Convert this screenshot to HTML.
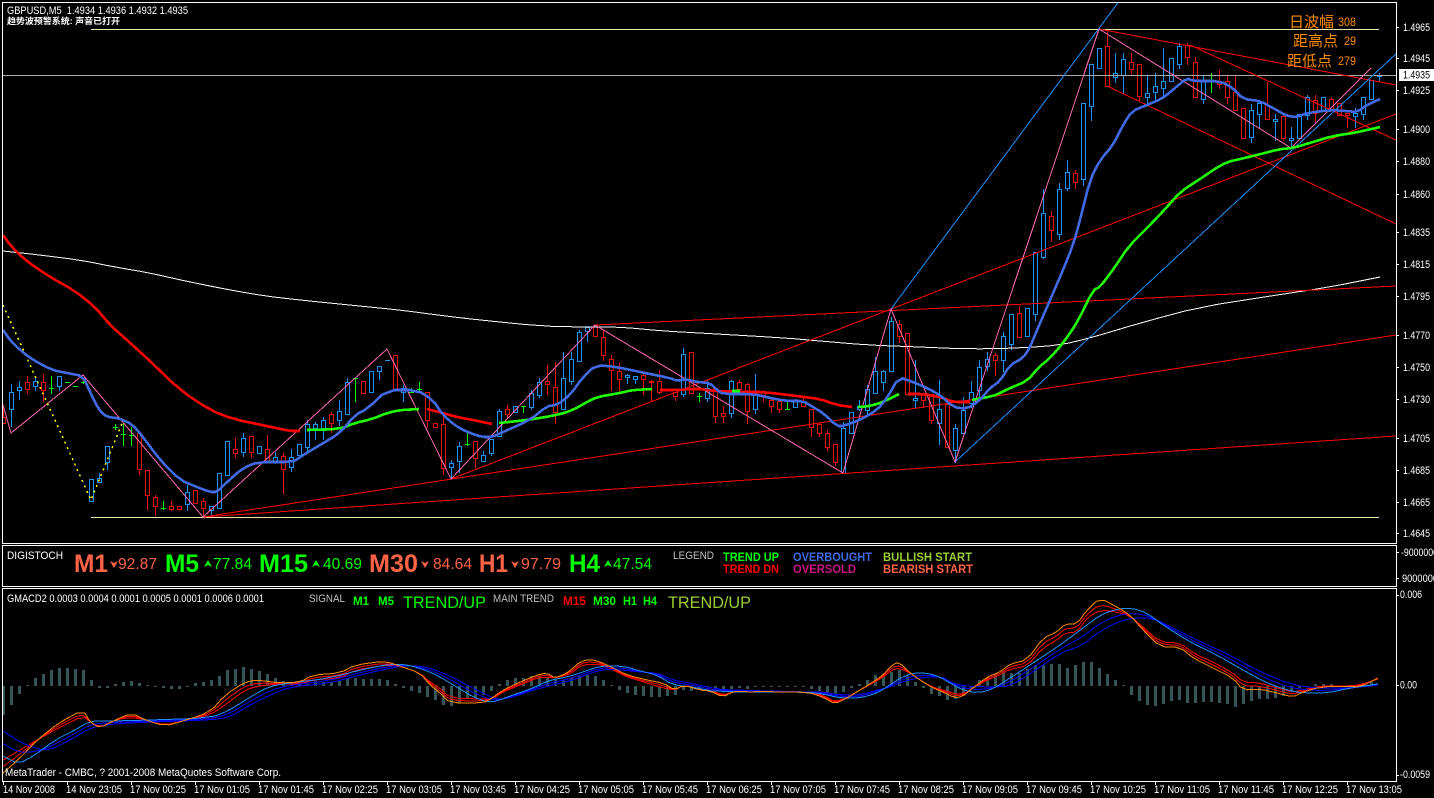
<!DOCTYPE html>
<html><head><meta charset="utf-8"><style>
html,body{margin:0;padding:0;background:#000;width:1434px;height:798px;overflow:hidden}
svg{display:block}
text{font-family:"Liberation Sans","WenQuanYi Zen Hei","Noto Sans CJK SC",sans-serif;fill:#fff;font-size:11px}
.b{font-weight:bold}
.g{fill:#00ff00}.o{fill:#ff6347}.v{font-size:16px}.big{font-size:25px;font-weight:bold}
.sm{font-size:12px;font-weight:bold}
.sil{fill:#c0c0c0}
.or{fill:#ff8c00;font-size:15px;font-family:"Noto Sans CJK SC",sans-serif}
.ord{fill:#ff8c00;font-size:12px}
</style></head><body>
<svg width="1434" height="798" viewBox="0 0 1434 798" xmlns="http://www.w3.org/2000/svg">
<defs><clipPath id="m"><rect x="3" y="3" width="1393" height="540"/></clipPath></defs>
<rect width="1434" height="798" fill="#000"/>
<g id="c" clip-path="url(#m)" shape-rendering="crispEdges"></g>
<g id="l" clip-path="url(#m)" fill="none" shape-rendering="crispEdges"></g>
<g id="h" shape-rendering="crispEdges"></g>
<g id="q" fill="none" shape-rendering="crispEdges"></g>
<g fill="none" stroke="#fff" shape-rendering="crispEdges">
<path d="M2.5 2.5H1396.5V543.5H2.5Z"/>
<path d="M2.5 545.5H1396.5V586.5H2.5Z"/>
<path d="M2.5 588.5H1396.5V781.5H2.5Z"/>
<path d="M1396 27.5h3M1396 58.5h3M1396 90.5h3M1396 129.5h3M1396 161.5h3M1396 194.5h3M1396 232.5h3M1396 264.5h3M1396 296.5h3M1396 335.5h3M1396 367.5h3M1396 399.5h3M1396 438.5h3M1396 470.5h3M1396 502.5h3M1396 533.5h3M1396 552.5h3M1396 578.5h3M1396 595.5h3M1396 685.5h3M1396 775.5h3"/>
<path d="M3.5 781v4M67.5 781v4M131.5 781v4M195.5 781v4M259.5 781v4M323.5 781v4M387.5 781v4M451.5 781v4M515.5 781v4M579.5 781v4M643.5 781v4M707.5 781v4M771.5 781v4M835.5 781v4M899.5 781v4M963.5 781v4M1027.5 781v4M1091.5 781v4M1155.5 781v4M1219.5 781v4M1283.5 781v4M1347.5 781v4"/>
</g>
<rect x="1399" y="69" width="35" height="12" fill="#fff"/>
<text x="7" y="14" textLength="181" lengthAdjust="spacingAndGlyphs">GBPUSD,M5&#160; 1.4934 1.4936 1.4932 1.4935</text>
<text x="7" y="24" font-weight="bold" style="font-size:8.5px" textLength="113" lengthAdjust="spacingAndGlyphs">趋势波预警系统: 声音已打开</text>
<text class="or" x="1289" y="27">日波幅</text><text class="ord" x="1338" y="26" textLength="18" lengthAdjust="spacingAndGlyphs">308</text>
<text class="or" x="1293" y="46">距高点</text><text class="ord" x="1344" y="45" textLength="12" lengthAdjust="spacingAndGlyphs">29</text>
<text class="or" x="1287" y="66">距低点</text><text class="ord" x="1338" y="65" textLength="18" lengthAdjust="spacingAndGlyphs">279</text>
<g>
<text x="1403" y="31" textLength="27" lengthAdjust="spacingAndGlyphs">1.4965</text>
<text x="1403" y="62" textLength="27" lengthAdjust="spacingAndGlyphs">1.4945</text>
<text x="1403" y="78.5" textLength="27" lengthAdjust="spacingAndGlyphs" style="fill:#000">1.4935</text>
<text x="1403" y="94" textLength="27" lengthAdjust="spacingAndGlyphs">1.4925</text>
<text x="1403" y="133" textLength="27" lengthAdjust="spacingAndGlyphs">1.4900</text>
<text x="1403" y="165" textLength="27" lengthAdjust="spacingAndGlyphs">1.4880</text>
<text x="1403" y="198" textLength="27" lengthAdjust="spacingAndGlyphs">1.4860</text>
<text x="1403" y="236" textLength="27" lengthAdjust="spacingAndGlyphs">1.4835</text>
<text x="1403" y="268" textLength="27" lengthAdjust="spacingAndGlyphs">1.4815</text>
<text x="1403" y="300" textLength="27" lengthAdjust="spacingAndGlyphs">1.4795</text>
<text x="1403" y="339" textLength="27" lengthAdjust="spacingAndGlyphs">1.4770</text>
<text x="1403" y="371" textLength="27" lengthAdjust="spacingAndGlyphs">1.4750</text>
<text x="1403" y="403" textLength="27" lengthAdjust="spacingAndGlyphs">1.4730</text>
<text x="1403" y="442" textLength="27" lengthAdjust="spacingAndGlyphs">1.4705</text>
<text x="1403" y="474" textLength="27" lengthAdjust="spacingAndGlyphs">1.4685</text>
<text x="1403" y="506" textLength="27" lengthAdjust="spacingAndGlyphs">1.4665</text>
<text x="1403" y="537" textLength="27" lengthAdjust="spacingAndGlyphs">1.4645</text>
<text x="1401" y="556" textLength="37" lengthAdjust="spacingAndGlyphs">-9000000</text>
<text x="1402" y="582" textLength="36" lengthAdjust="spacingAndGlyphs">9000000</text>
<text x="1400" y="598" textLength="22" lengthAdjust="spacingAndGlyphs">0.006</text>
<text x="1400" y="688.5" textLength="17" lengthAdjust="spacingAndGlyphs">0.00</text>
<text x="1400" y="778" textLength="30" lengthAdjust="spacingAndGlyphs">-0.0059</text>
</g>
<text x="7" y="559" textLength="56" lengthAdjust="spacingAndGlyphs">DIGISTOCH</text>
<text class="big o" x="74" y="572" textLength="34" lengthAdjust="spacingAndGlyphs">M1</text>
<text class="v o" x="118" y="569" textLength="39" lengthAdjust="spacingAndGlyphs">92.87</text>
<text class="big g" x="165" y="572" textLength="34" lengthAdjust="spacingAndGlyphs">M5</text>
<text class="v g" x="213" y="569" textLength="39" lengthAdjust="spacingAndGlyphs">77.84</text>
<text class="big g" x="259" y="572" textLength="49" lengthAdjust="spacingAndGlyphs">M15</text>
<text class="v g" x="323" y="569" textLength="39" lengthAdjust="spacingAndGlyphs">40.69</text>
<text class="big o" x="369" y="572" textLength="49" lengthAdjust="spacingAndGlyphs">M30</text>
<text class="v o" x="433" y="569" textLength="39" lengthAdjust="spacingAndGlyphs">84.64</text>
<text class="big o" x="479" y="572" textLength="29" lengthAdjust="spacingAndGlyphs">H1</text>
<text class="v o" x="521" y="569" textLength="40" lengthAdjust="spacingAndGlyphs">97.79</text>
<text class="big g" x="569" y="572" textLength="31" lengthAdjust="spacingAndGlyphs">H4</text>
<text class="v g" x="613" y="569" textLength="39" lengthAdjust="spacingAndGlyphs">47.54</text>
<path fill="#ff6347" d="M110 561l4 2 4-2-4 7zM421 561l4 2 4-2-4 7zM511 561l4 2 4-2-4 7z"/>
<path fill="#00ff00" d="M204 567l4-7 4 7-4-2zM312 567l4-7 4 7-4-2zM604 567l4-7 4 7-4-2z"/>
<text class="sil" x="673" y="559" textLength="41" lengthAdjust="spacingAndGlyphs">LEGEND</text>
<text class="sm" style="fill:#00ff00" x="723" y="561" textLength="56" lengthAdjust="spacingAndGlyphs">TREND UP</text>
<text class="sm" style="fill:#ff0000" x="723" y="573" textLength="56" lengthAdjust="spacingAndGlyphs">TREND DN</text>
<text class="sm" style="fill:#4169e1" x="793" y="561" textLength="79" lengthAdjust="spacingAndGlyphs">OVERBOUGHT</text>
<text class="sm" style="fill:#c71585" x="793" y="573" textLength="63" lengthAdjust="spacingAndGlyphs">OVERSOLD</text>
<text class="sm" style="fill:#9acd32" x="883" y="561" textLength="89" lengthAdjust="spacingAndGlyphs">BULLISH START</text>
<text class="sm" style="fill:#ff6347" x="883" y="573" textLength="90" lengthAdjust="spacingAndGlyphs">BEARISH START</text>
<text x="7" y="602" textLength="257" lengthAdjust="spacingAndGlyphs">GMACD2 0.0003 0.0004 0.0001 0.0005 0.0001 0.0006 0.0001</text>
<text class="sil" x="309" y="602" textLength="36" lengthAdjust="spacingAndGlyphs">SIGNAL</text>
<text class="sm g" x="353" y="605" textLength="16" lengthAdjust="spacingAndGlyphs">M1</text>
<text class="sm g" x="378" y="605" textLength="16" lengthAdjust="spacingAndGlyphs">M5</text>
<text class="g" style="font-size:17px" x="403" y="608" textLength="83" lengthAdjust="spacingAndGlyphs">TREND/UP</text>
<text class="sil" x="493" y="602" textLength="61" lengthAdjust="spacingAndGlyphs">MAIN TREND</text>
<text class="sm" style="fill:#ff0000" x="563" y="605" textLength="23" lengthAdjust="spacingAndGlyphs">M15</text>
<text class="sm g" x="593" y="605" textLength="23" lengthAdjust="spacingAndGlyphs">M30</text>
<text class="sm g" x="623" y="605" textLength="14" lengthAdjust="spacingAndGlyphs">H1</text>
<text class="sm g" x="643" y="605" textLength="14" lengthAdjust="spacingAndGlyphs">H4</text>
<text style="font-size:17px;fill:#9acd32" x="668" y="608" textLength="83" lengthAdjust="spacingAndGlyphs">TREND/UP</text>
<text x="5" y="776" textLength="276" lengthAdjust="spacingAndGlyphs">MetaTrader - CMBC, ? 2001-2008 MetaQuotes Software Corp.</text>
<g>
<text x="3" y="793" textLength="52" lengthAdjust="spacingAndGlyphs">14 Nov 2008</text>
<text x="66" y="793" textLength="56" lengthAdjust="spacingAndGlyphs">14 Nov 23:05</text>
<text x="130" y="793" textLength="56" lengthAdjust="spacingAndGlyphs">17 Nov 00:25</text>
<text x="194" y="793" textLength="56" lengthAdjust="spacingAndGlyphs">17 Nov 01:05</text>
<text x="258" y="793" textLength="56" lengthAdjust="spacingAndGlyphs">17 Nov 01:45</text>
<text x="322" y="793" textLength="56" lengthAdjust="spacingAndGlyphs">17 Nov 02:25</text>
<text x="386" y="793" textLength="56" lengthAdjust="spacingAndGlyphs">17 Nov 03:05</text>
<text x="450" y="793" textLength="56" lengthAdjust="spacingAndGlyphs">17 Nov 03:45</text>
<text x="514" y="793" textLength="56" lengthAdjust="spacingAndGlyphs">17 Nov 04:25</text>
<text x="578" y="793" textLength="56" lengthAdjust="spacingAndGlyphs">17 Nov 05:05</text>
<text x="642" y="793" textLength="56" lengthAdjust="spacingAndGlyphs">17 Nov 05:45</text>
<text x="706" y="793" textLength="56" lengthAdjust="spacingAndGlyphs">17 Nov 06:25</text>
<text x="770" y="793" textLength="56" lengthAdjust="spacingAndGlyphs">17 Nov 07:05</text>
<text x="834" y="793" textLength="56" lengthAdjust="spacingAndGlyphs">17 Nov 07:45</text>
<text x="898" y="793" textLength="56" lengthAdjust="spacingAndGlyphs">17 Nov 08:25</text>
<text x="962" y="793" textLength="56" lengthAdjust="spacingAndGlyphs">17 Nov 09:05</text>
<text x="1026" y="793" textLength="56" lengthAdjust="spacingAndGlyphs">17 Nov 09:45</text>
<text x="1090" y="793" textLength="56" lengthAdjust="spacingAndGlyphs">17 Nov 10:25</text>
<text x="1154" y="793" textLength="56" lengthAdjust="spacingAndGlyphs">17 Nov 11:05</text>
<text x="1218" y="793" textLength="56" lengthAdjust="spacingAndGlyphs">17 Nov 11:45</text>
<text x="1282" y="793" textLength="56" lengthAdjust="spacingAndGlyphs">17 Nov 12:25</text>
<text x="1346" y="793" textLength="56" lengthAdjust="spacingAndGlyphs">17 Nov 13:05</text>
</g>
</svg>
<script>
(function(){
var C={b:'#1e90ff',r:'#e80f0f',g:'#00ff00'};
var D=[[3,'r',405,423,417,423],[11,'b',384,426,392,409],[19,'b',381,399,387,390],[27,'r',376,393,382,389],[35,'b',378,390,381,386],[43,'r',374,401,382,390],[51,'g',376,393,388,388],[59,'b',376,390,376,386],[67,'g',382,382,382,382],[75,'g',386,386,386,386],[83,'g',381,383,382,382],[91,'b',479,501,479,501],[99,'b',473,482,478,482],[107,'b',446,469,446,462],[115,'g',424,429,427,427],[123,'g',423,445,434,434],[131,'g',427,445,435,435],[139,'r',433,474,433,469],[147,'r',470,509,470,495],[155,'r',495,515,497,506],[163,'g',501,509,508,508],[171,'r',501,510,506,509],[179,'r',506,510,506,509],[187,'b',485,510,492,504],[195,'r',490,503,490,503],[203,'r',498,517,501,508],[211,'b',506,517,506,510],[219,'b',473,508,473,508],[227,'b',441,475,441,475],[235,'r',438,457,449,453],[243,'b',433,456,438,452],[251,'r',436,457,436,452],[259,'b',446,453,446,453],[267,'r',435,462,449,462],[275,'b',452,463,457,462],[283,'r',453,493,456,469],[291,'b',449,471,457,467],[299,'b',444,455,444,455],[307,'b',420,450,424,447],[315,'b',422,439,424,428],[323,'b',417,439,420,428],[331,'r',412,432,414,423],[339,'b',400,425,411,420],[347,'b',378,414,382,414],[355,'g',378,401,378,378],[363,'r',381,393,381,393],[371,'b',371,392,371,392],[379,'b',366,379,366,371],[387,'b',360,360,360,360],[395,'r',355,389,355,389],[403,'b',385,401,388,392],[411,'g',388,392,392,392],[419,'g',382,392,389,389],[427,'r',392,427,392,420],[435,'r',423,427,423,427],[443,'r',417,474,424,468],[451,'b',460,478,463,467],[459,'b',442,472,446,461],[467,'g',432,445,444,444],[475,'r',441,467,441,458],[483,'b',451,461,455,461],[491,'b',439,455,439,453],[499,'b',409,436,411,436],[507,'r',405,417,409,414],[515,'b',406,412,406,412],[523,'g',406,412,406,406],[531,'b',390,409,393,407],[539,'b',378,397,382,395],[547,'r',365,394,381,384],[555,'r',362,423,387,412],[563,'b',352,409,378,409],[571,'b',352,384,359,381],[579,'b',330,361,332,361],[587,'b',327,341,327,331],[595,'r',325,336,325,336],[603,'r',330,360,337,355],[611,'r',355,390,359,370],[619,'r',363,390,371,379],[627,'b',374,383,375,377],[635,'b',376,383,376,379],[643,'r',374,394,375,379],[651,'r',380,401,381,382],[659,'r',370,393,381,392],[675,'r',392,400,392,396],[683,'b',348,396,354,394],[691,'r',352,393,352,393],[699,'g',393,401,396,396],[707,'b',380,401,388,398],[715,'r',387,422,388,416],[723,'r',406,422,413,416],[731,'b',380,417,381,413],[739,'r',380,393,382,389],[747,'r',383,423,384,411],[755,'b',374,413,393,409],[763,'r',390,401,391,395],[771,'r',399,412,400,406],[779,'r',400,412,401,409],[787,'g',401,409,409,409],[795,'b',399,407,401,407],[803,'r',397,406,401,406],[811,'r',409,436,409,427],[819,'r',422,436,424,433],[827,'r',430,450,433,447],[835,'r',444,465,444,462],[843,'b',422,473,428,473],[851,'b',412,433,412,433],[859,'b',400,410,406,409],[867,'b',385,415,389,410],[875,'b',357,393,371,393],[883,'b',370,390,371,382],[891,'b',317,371,321,371],[899,'r',320,342,324,336],[907,'r',333,394,333,394],[915,'b',360,407,398,400],[923,'r',393,407,394,400],[931,'r',394,423,394,420],[939,'b',380,444,409,423],[947,'r',404,447,404,447],[955,'b',424,462,428,450],[963,'b',397,433,410,433],[971,'b',381,407,392,403],[979,'b',360,400,367,390],[987,'b',352,370,359,366],[995,'r',353,375,355,360],[1003,'b',332,371,336,360],[1011,'b',314,349,314,344],[1019,'r',306,337,313,337],[1027,'b',308,336,308,336],[1035,'b',252,320,252,314],[1043,'b',189,258,213,257],[1051,'r',211,241,216,230],[1059,'b',183,239,189,234],[1067,'b',160,190,172,188],[1075,'r',170,188,173,182],[1083,'b',103,185,103,179],[1091,'b',64,120,64,106],[1099,'b',48,68,48,68],[1107,'r',29,86,46,86],[1115,'b',53,82,73,77],[1123,'b',53,93,59,75],[1131,'r',53,73,62,69],[1139,'r',64,100,64,96],[1147,'b',75,103,93,97],[1155,'b',73,100,86,92],[1163,'b',48,98,81,88],[1171,'b',58,81,58,81],[1179,'b',43,68,46,64],[1187,'r',43,64,45,57],[1195,'r',57,97,62,97],[1203,'b',75,103,81,99],[1211,'g',73,92,81,81],[1219,'r',70,88,81,84],[1227,'r',75,103,81,97],[1235,'r',75,110,92,110],[1243,'r',108,138,108,138],[1251,'b',104,142,110,137],[1259,'b',100,128,103,114],[1267,'r',82,119,105,119],[1275,'b',114,140,119,121],[1283,'r',113,140,116,138],[1291,'b',127,148,138,140],[1299,'b',114,138,114,138],[1307,'b',95,119,97,115],[1315,'r',95,123,100,113],[1323,'b',97,110,97,110],[1331,'r',97,110,99,110],[1339,'r',103,115,103,115],[1347,'r',113,127,113,115],[1355,'b',108,127,113,116],[1363,'b',97,119,97,114],[1371,'b',80,99,80,99],[1379,'b',73,80,76,76]];
var s='';
D.forEach(function(d){var x=d[0],c=C[d[1]];
 s+='<path stroke="'+c+'" d="M'+(x+.5)+' '+d[2]+'V'+(d[3]+1)+'"/>';
 if(d[4]==d[5]) s+='<path stroke="'+c+'" d="M'+(x-2)+' '+(d[4]+.5)+'h5"/>';
 else s+='<rect x="'+(x-1.5)+'" y="'+(d[4]+.5)+'" width="4" height="'+(d[5]-d[4])+'" fill="#000" stroke="'+c+'"/>';
});
document.getElementById('c').innerHTML=s;
function S(a){var r=[a[0]];for(var i=0;i<a.length-1;i++){var p=a[i],q=a[i+1];r.push([+(p[0]*.75+q[0]*.25).toFixed(1),+(p[1]*.75+q[1]*.25).toFixed(1)]);r.push([+(p[0]*.25+q[0]*.75).toFixed(1),+(p[1]*.25+q[1]*.75).toFixed(1)])}r.push(a[a.length-1]);return r}
function P(a,c,w,e){return '<polyline points="'+a.map(function(p){return p.join(',')}).join(' ')+'" stroke="'+c+'" stroke-width="'+w+'"'+(e||'')+'/>'}
var L='';
var red='#ff0000',pink='#ff69b4',dod='#1e90ff',T=2.6;
L+=P([[91,29.5],[1379,29.5]],'#eee8aa',1)+P([[91,517.5],[1379,517.5]],'#eee8aa',1)+P([[3,75.5],[1396,75.5]],'#a9a9a9',1);
L+=P(S([[3,251],[40,255],[80,260],[115,267],[150,273],[190,282],[230,290],[265,296],[300,300],[350,305],[400,310],[445,316],[480,320],[540,326],[585,327],[620,327],[663,331],[700,333],[787,338],[820,341],[867,345],[920,347],[967,349],[1020,348],[1060,345],[1090,338],[1140,323],[1200,307],[1270,296],[1330,287],[1380,277]]),'#fff',1);
[[[203,517],[1396,436]],[[203,517],[1396,335]],[[451,479],[1396,114]],[[595,325],[1396,286]],[[1099,29],[1396,85]],[[1107,86],[1396,224]],[[1190,45],[1396,140]]].forEach(function(a){L+=P(a,red,1)});
L+=P([[891,309],[1120,0]],dod,1)+P([[955,462],[1396,54]],dod,1);
L+=P([[3,405],[11,433],[83,375],[203,517],[387,349],[451,479],[595,325],[843,473],[891,309],[955,462],[1099,29],[1291,148],[1371,68]],pink,1);
L+=P([[3,305],[91,500],[123,421]],'#ffff00',1.5,' stroke-dasharray="2 4"');
L+=P(S([[3,235],[10,245],[25,260],[50,277],[75,291],[95,307],[110,325],[127,340],[150,361],[180,390],[210,410],[233,419],[267,426],[290,431],[300,431]]),red,T);
L+=P(S([[427,409],[442,413],[457,417],[473,420],[492,424]]),red,T);
L+=P(S([[660,390],[675,390],[692,389],[700,389],[715,391],[748,392],[763,392],[797,396],[820,399],[837,405],[852,407]]),red,T);
L+=P(S([[908,394],[923,394],[940,397],[953,402],[970,402]]),red,T);
var gr='#1fff00';
L+=P(S([[307,430],[340,429],[355,423],[372,419],[387,413],[400,410],[419,409]]),gr,T);
L+=P(S([[499,423],[527,420],[557,415],[573,410],[587,402],[597,397],[620,393],[632,390],[652,389]]),gr,T);
L+=P([[732,391],[740,391]],gr,T);
L+=P(S([[858,407],[870,406],[883,402],[899,394]]),gr,T);
L+=P(S([[972,400],[993,396],[1000,393],[1010,388],[1027,381],[1038,368],[1050,358],[1063,343],[1077,323],[1093,290],[1100,287],[1115,267],[1128,247],[1150,225],[1167,207],[1180,192],[1200,179],[1213,170],[1227,162],[1240,159],[1257,155],[1280,149],[1293,148],[1313,142],[1333,136],[1353,133],[1367,130],[1380,127]]),gr,T);
L+=P(S([[3,330],[10,340],[20,350],[33,360],[52,370],[67,373],[83,376],[90,392],[99,410],[107,417],[118,418],[132,424],[143,437],[160,460],[180,480],[197,487],[210,492],[217,492],[227,482],[243,468],[258,462],[293,462],[300,457],[320,445],[340,433],[355,415],[367,409],[387,390],[417,390],[433,400],[443,415],[457,427],[470,433],[482,437],[492,437],[503,432],[530,420],[547,406],[557,405],[570,395],[583,377],[596,365],[617,367],[640,372],[670,378],[678,381],[685,379],[697,382],[710,383],[717,390],[723,394],[753,394],[770,398],[787,401],[803,401],[813,407],[823,413],[837,426],[843,426],[860,420],[877,410],[887,398],[899,377],[913,382],[927,388],[940,395],[953,407],[967,409],[980,400],[990,388],[1000,381],[1010,365],[1023,358],[1030,347],[1037,330],[1050,300],[1063,270],[1073,245],[1080,220],[1090,180],[1100,160],[1113,145],[1123,125],[1132,111],[1147,105],[1163,98],[1175,88],[1187,78],[1193,81],[1220,81],[1233,88],[1243,99],[1260,101],[1273,108],[1287,116],[1297,117],[1307,113],[1330,110],[1347,111],[1357,112],[1367,105],[1380,99]]),'#4169e1',T);
document.getElementById('l').innerHTML=L;
var H=[29,19,8,-1,-8,-12,-16,-18,-18,-17,-16,-6,2,2,-2,-4,-5,-3,-1,1,2,3,3,1,-3,-4,-6,-10,-16,-17,-19,-17,-15,-12,-8,-5,-4,-3,-2,-5,-4,-4,-5,-8,-8,-7,-7,-7,-6,-2,2,5,7,11,14,19,20,17,13,12,9,5,-2,-6,-8,-8,-10,-10,-8,-7,-6,-8,-10,-11,-10,-6,-1,4,7,9,10,11,11,10,9,4,5,3,0,4,3,3,2,3,1,1,1,1,1,1,1,3,5,7,8,6,2,-2,-6,-11,-10,-14,-16,-10,-4,2,8,10,14,13,10,3,-6,-9,-12,-15,-13,-13,-17,-21,-21,-22,-22,-18,-21,-24,-24,-18,-12,-6,-1,9,15,19,20,18,15,14,17,17,16,16,17,18,21,18,15,13,13,12,10,6,2,0,-2,-2,-2,1,1,-1,-3,-5];
var h='';H.forEach(function(v,i){var x=3+8*i,t=v>0?686:686+v,n=Math.max(Math.abs(v),1);if(v==0)t=686;h+='<rect x="'+(x-1)+'" y="'+t+'" width="3" height="'+n+'"/>'});
document.getElementById('h').setAttribute('fill','#345656');
document.getElementById('h').innerHTML=h;
var o=S([[3,773],[20,758],[37,740],[60,722],[83,710],[90,722],[100,728],[115,720],[132,713],[145,720],[165,726],[183,721],[210,712],[225,695],[245,682],[258,680],[280,683],[300,682],[313,675],[340,673],[355,665],[385,661],[400,666],[420,673],[430,685],[440,693],[450,703],[483,703],[492,698],[503,690],[520,682],[537,675],[547,673],[555,678],[567,673],[573,668],[580,662],[590,659],[603,663],[613,668],[627,675],[647,680],[663,683],[675,690],[683,685],[700,690],[710,691],[723,697],[732,692],[740,691],[750,692],[763,691],[777,692],[807,692],[823,697],[835,704],[847,698],[860,690],[873,682],[883,675],[892,665],[899,662],[910,673],[923,682],[933,688],[943,692],[955,698],[963,696],[973,688],[987,677],[1000,672],[1010,664],[1027,660],[1043,638],[1057,632],[1065,624],[1077,624],[1087,610],[1100,598],[1117,607],[1130,615],[1143,630],[1160,647],[1180,647],[1193,658],[1213,668],[1233,678],[1243,690],[1260,689],[1277,693],[1293,697],[1303,692],[1320,687],[1343,686],[1360,687],[1378,678]]);
var r=S([[3,760],[20,750],[37,740],[60,727],[83,716],[90,722],[100,727],[115,720],[132,717],[145,720],[165,725],[183,721],[210,715],[225,705],[245,690],[258,686],[280,684],[300,684],[313,680],[340,678],[355,670],[385,665],[400,666],[420,673],[430,682],[440,688],[450,698],[483,699],[492,699],[503,692],[520,685],[537,678],[547,677],[555,678],[567,675],[573,672],[580,666],[590,664],[603,665],[613,670],[627,677],[647,683],[663,688],[675,690],[683,685],[700,689],[710,690],[723,695],[732,692],[740,691],[807,692],[823,695],[835,702],[847,697],[860,690],[873,683],[883,677],[892,670],[899,668],[910,673],[923,682],[933,687],[943,690],[955,694],[963,694],[973,688],[987,680],[1000,675],[1010,669],[1027,666],[1043,648],[1057,640],[1065,633],[1077,632],[1087,618],[1100,610],[1117,612],[1130,616],[1143,627],[1160,642],[1180,643],[1193,653],[1213,662],[1233,673],[1243,682],[1260,683],[1277,688],[1293,692],[1303,690],[1320,686],[1343,686],[1360,685],[1378,679]]);
var d=S([[3,756],[18,764],[35,755],[55,740],[75,730],[90,721],[110,721],[150,720],[210,718],[230,710],[250,697],[270,686],[290,683],[330,678],[360,670],[390,664],[410,665],[430,672],[440,677],[450,683],[460,689],[473,697],[488,702],[497,701],[513,695],[533,688],[550,680],[567,677],[583,672],[600,666],[623,666],[640,671],[657,675],[673,685],[693,687],[717,692],[807,692],[823,694],[840,698],[860,698],[877,693],[890,685],[900,678],[913,673],[927,673],[940,677],[950,683],[963,690],[978,693],[993,689],[1013,676],[1033,663],[1060,645],[1083,628],[1100,615],[1117,609],[1132,608],[1147,613],[1163,625],[1190,642],[1217,655],[1243,670],[1267,683],[1287,690],[1303,693],[1327,693],[1350,688],[1378,684]]);
var b=S([[3,731],[20,742],[37,749],[50,750],[70,740],[90,728],[110,724],[150,722],[210,720],[230,717],[250,705],[270,695],[290,687],[330,683],[360,675],[390,668],[410,665],[430,668],[440,672],[450,676],[467,685],[483,693],[497,700],[513,697],[533,690],[553,685],[573,680],[590,673],[607,669],[623,670],[640,672],[657,673],[673,680],[690,683],[717,689],[733,690],[807,692],[823,692],[840,695],[860,695],[877,690],[890,687],[907,680],[927,677],[943,677],[950,682],[963,686],[993,687],[1010,686],[1033,672],[1060,653],[1083,645],[1097,633],[1117,622],[1133,618],[1153,618],[1177,630],[1203,643],[1230,655],[1260,672],[1293,685],[1317,688],[1350,688],[1378,685]]);
function I(a,x){for(var i=1;i<a.length;i++){if(x<=a[i][0]){var t=(x-a[i-1][0])/(a[i][0]-a[i-1][0]);return a[i-1][1]+t*(a[i][1]-a[i-1][1])}}return a[a.length-1][1]}
function M(a,c){var m=[];for(var x=3;x<=1378;x+=4)m.push([x,((I(a,x)+I(c,x))/2).toFixed(1)]);return m}
var q=P(r,'#ff0000',1)+P(M(o,r),'#ff0000',1)+P(b,'#0000ff',1)+P(M(d,b),'#0000ff',1)+P(d,'#1e90ff',1)+P(o,'#ff8c00',1);
document.getElementById('q').innerHTML=q;
})();
</script>
</body></html>
